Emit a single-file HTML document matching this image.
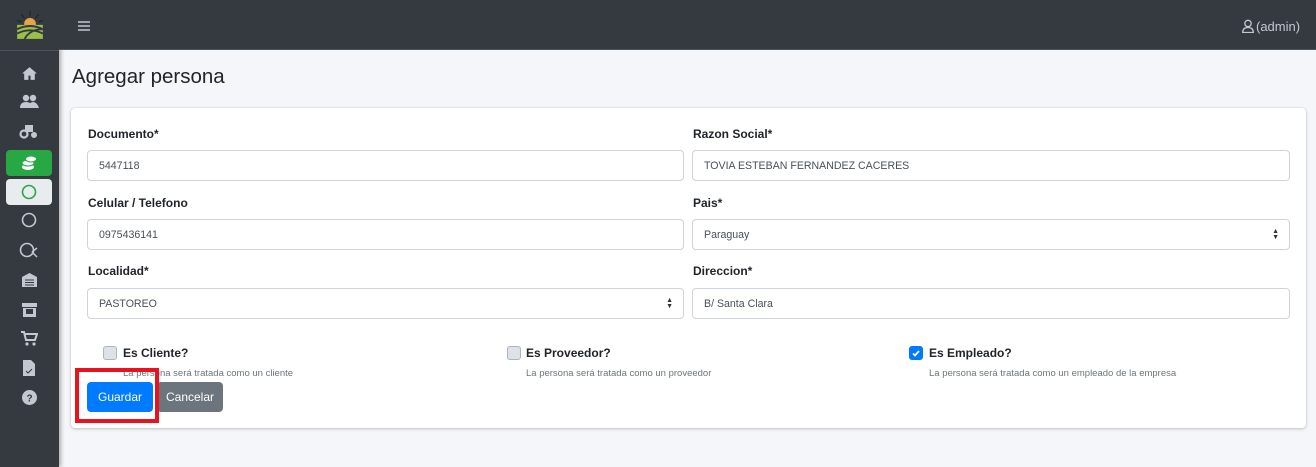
<!DOCTYPE html>
<html><head><meta charset="utf-8"><style>
*{box-sizing:border-box;margin:0;padding:0}
body{width:1316px;height:467px;overflow:hidden;background:#f4f6f9;font-family:"Liberation Sans",sans-serif;position:relative;color:#212529}
.side{position:absolute;left:0;top:0;width:59px;height:467px;background:#343a40;box-shadow:2px 0 4px rgba(0,0,0,.3)}
.top{position:absolute;left:59px;top:0;right:0;height:50px;background:#343a40;border-bottom:1px solid #4b545c}
.logoline{position:absolute;left:0;top:50px;width:59px;height:1px;background:#4b545c}
.ic{position:absolute;left:6px;width:46px;height:26px;border-radius:4px;display:flex;align-items:center;justify-content:center}
h1{position:absolute;left:72px;top:65px;font-size:20.5px;font-weight:400;color:#212529}
.card{position:absolute;left:71px;top:108px;width:1235px;height:320px;background:#fff;border-radius:4px;box-shadow:0 0 1px rgba(0,0,0,.2),0 1px 3px rgba(0,0,0,.2)}
label.l{position:absolute;font-size:12px;font-weight:700}
.in{position:absolute;height:31px;border:1px solid #ced4da;border-radius:4px;font-size:10.6px;color:#495057;padding:9px 11px;background:#fff}
.arr{position:absolute;right:10px;top:9px;font-size:7px;line-height:6px;color:#333}
.cb{position:absolute;width:14px;height:14px;border:1px solid #adb5bd;border-radius:3px;background:#dee2e6}
.ct{position:absolute;font-size:12px;font-weight:700}
.small{position:absolute;font-size:9.5px;color:#6c757d}
.btn{position:absolute;top:382px;height:30px;border-radius:4px;color:#fff;font-size:12px;display:flex;align-items:center;justify-content:center}
</style></head><body>
<div class="side">
 <svg style="position:absolute;left:15px;top:11px" width="30" height="30" viewBox="0 0 28 28"><g stroke="#222" stroke-width="1"><line x1="14" y1="0" x2="14" y2="5"/><line x1="6" y1="3" x2="9" y2="7"/><line x1="22" y1="3" x2="19" y2="7"/><line x1="2" y1="9" x2="6" y2="10"/><line x1="26" y1="9" x2="22" y2="10"/></g><circle cx="14" cy="12" r="5.5" fill="#e8a446"/><path d="M2 13h24v13H2z" fill="#9cbf4a"/><path d="M2 17q12-6 24 0M2 21q12-6 24 0M9 26q5-9 17-9" stroke="#343a40" stroke-width="1.8" fill="none"/></svg>
 <div class="ic" style="top:60px"><svg width="17" height="15" viewBox="0 0 16 14"><path d="M8 1L1 7h2v6h4V9h2v4h4V7h2z" fill="#c2c7d0"/></svg></div>
 <div class="ic" style="top:88px"><svg width="19" height="15"><circle cx="6" cy="4" r="3.2" fill="#c2c7d0"/><circle cx="13" cy="4" r="3.2" fill="#c2c7d0"/><path d="M0 14q0-6 6-6t6 6zM8 14q1-6 5-6t6 6z" fill="#c2c7d0"/></svg></div>
 <div class="ic" style="top:118px"><svg width="20" height="15"><circle cx="5" cy="10" r="3.5" fill="none" stroke="#c2c7d0" stroke-width="2.2"/><circle cx="15" cy="11" r="3" fill="#c2c7d0"/><rect x="6" y="1" width="8" height="7" fill="#c2c7d0"/></svg></div>
 <div class="ic" style="top:150px;background:#28a745"><svg width="17" height="16"><ellipse cx="7" cy="12" rx="6" ry="3" fill="#fff"/><ellipse cx="7" cy="8" rx="6" ry="3" fill="#fff" stroke="#28a745"/><ellipse cx="10" cy="4" rx="5.5" ry="3" fill="#fff" stroke="#28a745"/></svg></div>
 <div class="ic" style="top:179px;background:#e9ecef"><svg width="16" height="16"><circle cx="8" cy="8" r="6.5" fill="none" stroke="#28a745" stroke-width="1.6"/></svg></div>
 <div class="ic" style="top:207px"><svg width="16" height="16"><circle cx="8" cy="8" r="6.5" fill="none" stroke="#c2c7d0" stroke-width="1.6"/></svg></div>
 <div class="ic" style="top:237px"><svg width="20" height="16"><circle cx="8" cy="8" r="6.5" fill="none" stroke="#c2c7d0" stroke-width="1.6"/><path d="M13 10l5-4M13 10l5 5" stroke="#c2c7d0" stroke-width="1.5"/></svg></div>
 <div class="ic" style="top:266px"><svg width="17" height="15"><path d="M1 5L8.5 1 16 5v10H1z" fill="#c2c7d0"/><path d="M4 8h9M4 10.5h9M4 13h9" stroke="#343a40"/></svg></div>
 <div class="ic" style="top:296px"><svg width="17" height="15"><path d="M1 1h15v4H1zM2 6h13v9H2z" fill="#c2c7d0"/><rect x="5" y="7" width="7" height="5" fill="#343a40"/></svg></div>
 <div class="ic" style="top:325px"><svg width="17" height="15"><path d="M0 1h3l2 8h9l2-6H4" fill="none" stroke="#c2c7d0" stroke-width="2"/><circle cx="6" cy="13" r="1.6" fill="#c2c7d0"/><circle cx="13" cy="13" r="1.6" fill="#c2c7d0"/></svg></div>
 <div class="ic" style="top:355px"><svg width="12" height="16"><path d="M0 0h8l4 4v12H0z" fill="#c2c7d0"/><path d="M3 11l2 2 4-4" stroke="#343a40" fill="none"/></svg></div>
 <div class="ic" style="top:384px"><svg width="15" height="15"><circle cx="7.5" cy="7.5" r="7.5" fill="#c2c7d0"/><text x="7.5" y="11.5" font-size="10" font-weight="700" text-anchor="middle" fill="#343a40" font-family="Liberation Sans">?</text></svg></div>
</div>
<div class="logoline"></div>
<div class="top">
 <svg style="position:absolute;left:19px;top:21px" width="12" height="10"><path d="M0 1h12M0 5h12M0 9h12" stroke="#c2c7d0" stroke-width="1.6"/></svg>
 <svg style="position:absolute;left:1183px;top:19px" width="12" height="14"><circle cx="6" cy="4.5" r="3.2" fill="none" stroke="#c2c7d0" stroke-width="1.3"/><path d="M0.7 13.5q0-5 5.3-5t5.3 5z" fill="none" stroke="#c2c7d0" stroke-width="1.3"/></svg>
 <span style="position:absolute;left:1197px;top:19px;font-size:13px;color:#c2c7d0">(admin)</span>
</div>
<h1>Agregar persona</h1>
<div class="card"></div>
<label class="l" style="left:88px;top:127px">Documento*</label>
<label class="l" style="left:693px;top:127px">Razon Social*</label>
<div class="in" style="left:87px;top:150px;width:597px">5447118</div>
<div class="in" style="left:692px;top:150px;width:598px">TOVIA ESTEBAN FERNANDEZ CACERES</div>
<label class="l" style="left:88px;top:196px">Celular / Telefono</label>
<label class="l" style="left:693px;top:196px">Pais*</label>
<div class="in" style="left:87px;top:219px;width:597px">0975436141</div>
<div class="in" style="left:692px;top:219px;width:598px">Paraguay<span class="arr">▲<br>▼</span></div>
<label class="l" style="left:88px;top:264px">Localidad*</label>
<label class="l" style="left:693px;top:264px">Direccion*</label>
<div class="in" style="left:87px;top:288px;width:597px">PASTOREO<span class="arr">▲<br>▼</span></div>
<div class="in" style="left:692px;top:288px;width:598px">B/ Santa Clara</div>
<div class="cb" style="left:103px;top:346px"></div><div class="ct" style="left:123px;top:346px">Es Cliente?</div>
<div class="small" style="left:123px;top:368px">La persona será tratada como un cliente</div>
<div class="cb" style="left:507px;top:346px"></div><div class="ct" style="left:526px;top:346px">Es Proveedor?</div>
<div class="small" style="left:526px;top:368px">La persona será tratada como un proveedor</div>
<div class="cb" style="left:909px;top:346px;background:#007bff;border-color:#007bff"><svg width="12" height="12" style="position:absolute;left:0;top:0"><path d="M3 6.5l2 2 4-4.5" stroke="#fff" stroke-width="1.8" fill="none"/></svg></div><div class="ct" style="left:929px;top:346px">Es Empleado?</div>
<div class="small" style="left:929px;top:368px">La persona será tratada como un empleado de la empresa</div>
<div class="btn" style="left:87px;width:66px;background:#007bff">Guardar</div>
<div class="btn" style="left:157px;width:66px;background:#6c757d">Cancelar</div>
<div style="position:absolute;left:75px;top:368px;width:84px;height:55px;border:4px solid #e8131f"></div>
</body></html>
